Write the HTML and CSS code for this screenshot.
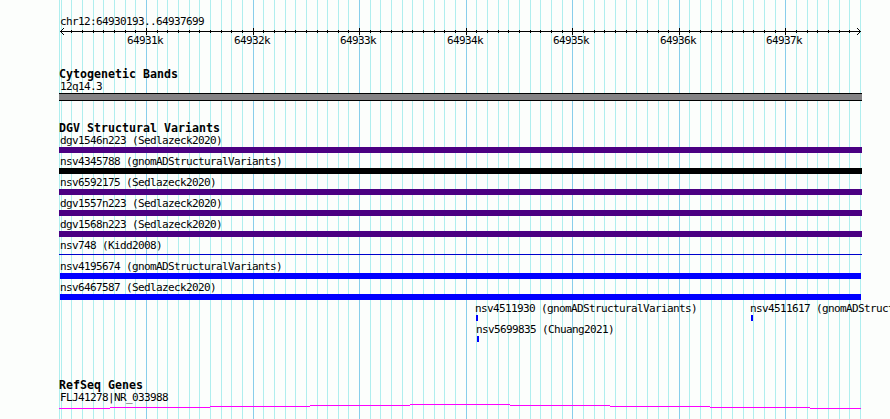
FILE: index.html
```
<!DOCTYPE html>
<html lang="en">
<head>
  <meta charset="UTF-8">
  <title>chr12:64930193..64937699</title>
  <link rel="stylesheet" href="styles.css">
</head>
<body>
  <div class="browser">
    <svg class="grid" id="grid" width="890" height="419" shape-rendering="crispEdges"></svg>

    <div class="tracks">
      <section class="track ruler">
        <div class="label">chr12:64930193..64937699</div>
        <svg class="scale" id="scale" width="890" height="28" shape-rendering="crispEdges"></svg>
      </section>

      <section class="track cytobands">
        <h2>Cytogenetic Bands</h2>
        <div class="label">12q14.3</div>
        <div class="band"></div>
      </section>

      <section class="track variants">
        <h2>DGV Structural Variants</h2>
        <div class="feature purple"><div class="label">dgv1546n223 (Sedlazeck2020)</div><div class="bar"></div></div>
        <div class="feature black"><div class="label">nsv4345788 (gnomADStructuralVariants)</div><div class="bar"></div></div>
        <div class="feature purple"><div class="label">nsv6592175 (Sedlazeck2020)</div><div class="bar"></div></div>
        <div class="feature purple"><div class="label">dgv1557n223 (Sedlazeck2020)</div><div class="bar"></div></div>
        <div class="feature purple"><div class="label">dgv1568n223 (Sedlazeck2020)</div><div class="bar"></div></div>
        <div class="feature thin"><div class="label">nsv748 (Kidd2008)</div><div class="bar"></div></div>
        <div class="feature blue"><div class="label">nsv4195674 (gnomADStructuralVariants)</div><div class="bar"></div></div>
        <div class="feature blue"><div class="label">nsv6467587 (Sedlazeck2020)</div><div class="bar"></div></div>
        <div class="row">
          <div class="feature small first"><div class="label">nsv4511930 (gnomADStructuralVariants)</div><div class="bar"></div></div>
          <div class="feature small second"><div class="label">nsv4511617 (gnomADStructuralVariants)</div><div class="bar"></div></div>
        </div>
        <div class="row">
          <div class="feature small third"><div class="label">nsv5699835 (Chuang2021)</div><div class="bar"></div></div>
        </div>
      </section>

      <section class="track genes">
        <h2>RefSeq Genes</h2>
        <div class="label">FLJ41278|NR_033988</div>
        <svg class="gene" width="803" height="6" shape-rendering="crispEdges">
          <path fill="#ff00ff" d="M0 4h51v1H0zM51 3h100v1H51zM151 2h100v1H151zM251 1h100v1H251zM351 0h100v1H351zM451 1h100v1H451zM551 2h100v1H551zM651 3h100v1H651zM751 4h51v1H751z"/>
        </svg>
      </section>
    </div>
  </div>
  <script src="script.js"></script>
</body>
</html>
```

FILE: styles.css
```
body {
  margin: 0;
  background: #fcfefc;
  color: #000;
  font-family: "DejaVu Sans Mono", monospace;
  overflow: hidden;
}

.browser {
  position: relative;
  width: 890px;
  height: 419px;
  overflow: hidden;
}

/* vertical lines behind all the tracks */
.grid {
  position: absolute;
  top: 0;
  left: 0;
}

.tracks {
  position: relative;
  padding-top: 15px;
}

.track {
  box-sizing: border-box;
  padding-left: 59px;
}

h2 {
  margin: 0;
  height: 12px;
  font-size: 11.6px;
  line-height: 13px;
  font-weight: bold;
  letter-spacing: 0.016px;
  white-space: pre;
}

.label {
  height: 13px;
  padding-left: 1px;
  font-size: 11px;
  line-height: 13px;
  letter-spacing: -0.622px;
  white-space: nowrap;
}

.ruler {
  height: 53px;
}

.scale {
  display: block;
  margin-left: -59px;
}

.scale text {
  font-size: 11px;
  letter-spacing: -0.622px;
}

.cytobands {
  height: 54px;
}

.band {
  box-sizing: border-box;
  width: 803px;
  height: 8px;
  background: #848284;
  border-top: 1px solid #000;
  border-bottom: 1px solid #000;
}

.variants {
  height: 257px;
}

.feature {
  height: 21px;
}

.bar {
  width: 803px;
  height: 6px;
}

.purple .bar {
  background: #4b0082;
}

.black .bar {
  background: #000;
}

.blue .bar {
  width: 801px;
  margin-left: 1px;
  background: #00f;
}

.thin .bar {
  height: 1px;
  margin-top: 2px;
  background: #0000cd;
}

.row {
  display: flex;
}

.small .bar {
  width: 2px;
  margin-left: 1px;
  background: #00f;
}

.small .label {
  padding-left: 0;
}

.small {
  flex: none;
}

.first {
  width: 275px;
  margin-left: 416px;
}

.third {
  margin-left: 417px;
}

.gene {
  display: block;
}
```

FILE: script.js
```
const start = 64930193;
const pxPerBase = 800 / 7507;
const grid = document.getElementById("grid");
const scale = document.getElementById("scale");

function toX(pos) {
  return Math.round(60 + (pos - start) * pxPerBase);
}

function rect(parent, x, y, w, h, color) {
  const r = document.createElementNS("http://www.w3.org/2000/svg", "rect");
  r.setAttribute("x", x);
  r.setAttribute("y", y);
  r.setAttribute("width", w);
  r.setAttribute("height", h);
  r.setAttribute("fill", color);
  parent.appendChild(r);
}

rect(grid, 59, 0, 1, 419, "#afeeee");
rect(scale, 60, 3, 801, 1, "#000");

// minor line every 100 bp, major line with a label every 1000 bp
for (let pos = 64930200; pos <= 64937700; pos += 100) {
  const x = toX(pos);
  const major = pos % 1000 === 0;
  rect(grid, x, 0, 1, 419, major ? "#87ceeb" : "#afeeee");
  if (pos > 64930200 && pos < 64937700) {
    rect(scale, x, major ? 0 : 2, 1, major ? 7 : 3, "#000");
  }
  if (major) {
    const t = document.createElementNS("http://www.w3.org/2000/svg", "text");
    t.setAttribute("x", x - 19);
    t.setAttribute("y", 16);
    t.textContent = pos / 1000 + "k";
    scale.appendChild(t);
  }
}

// arrow heads
for (let i = 1; i < 4; i++) {
  rect(scale, 60 + i, 3 - i, 1, 1, "#000");
  rect(scale, 60 + i, 3 + i, 1, 1, "#000");
  rect(scale, 860 - i, 3 - i, 1, 1, "#000");
  rect(scale, 860 - i, 3 + i, 1, 1, "#000");
}
```
